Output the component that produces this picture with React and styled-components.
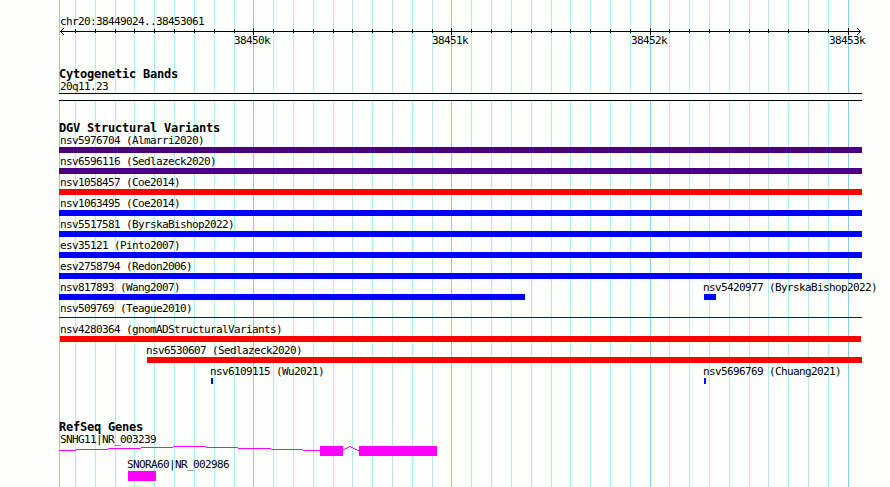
import React from 'react'
import styled, { createGlobalStyle } from 'styled-components'

const GlobalStyle = createGlobalStyle`
    body{
        margin: 0;
        padding: 0;
        background: #fdfffc;
    }
`;

const Browser = styled.main`
    display: grid;
    width: 890px;
    height: 487px;
    overflow: hidden;
    color: #000;
`;

const GridLines = styled.svg`
    grid-area: 1 / 1;
    display: block;
    shape-rendering: crispEdges;
`;

const Tracks = styled.div`
    grid-area: 1 / 1;
    display: flex;
    flex-direction: column;
    padding: 15px 0 0 59px;
`;

const Label = styled.div`
    height: 13px;
    font: 11px/13px 'DejaVu Sans Mono', monospace;
    letter-spacing: -0.62px;
    text-indent: ${p => p.$indent ?? 1}px;
    white-space: pre;
`;

const Title = styled.h2`
    height: 13px;
    margin: 0;
    font: bold 12px/13px 'DejaVu Sans Mono', monospace;
    letter-spacing: -0.22px;
    white-space: pre;
`;

const Ruler = styled.section`
    height: 53px;
`;

const Axis = styled.svg`
    display: block;
    shape-rendering: crispEdges;
`;

const Scale = styled.div`
    display: grid;
    margin-top: -1px;
`;

const ScaleMark = styled(Label)`
    grid-area: 1 / 1;
    margin-left: ${p => p.$x - 59}px;
    width: 40px;
`;

const Cytobands = styled.section`
    height: 54px;
`;

const BandName = styled(Label)`
    height: 12px;
    line-height: 11px;
`;

const Band = styled.div`
    box-sizing: border-box;
    width: 803px;
    height: 8px;
    border: solid #000;
    border-width: 1px 0;
    background: #fdfffc;
`;

const Variants = styled.section`
    height: 299px;
`;

const Lanes = styled.div`
    margin-top: -1px;
`;

const Lane = styled.div`
    display: grid;
    height: 21px;
`;

const Feature = styled.div`
    grid-area: 1 / 1;
    margin-left: ${p => p.$x - 59}px;
`;

const Bar = styled.div`
    width: ${p => p.$w}px;
    height: ${p => p.$h || 6}px;
    margin-top: ${p => p.$drop || 0}px;
    background: ${p => p.$color};
`;

const Genes = styled.section`
    display: flex;
    flex-direction: column;
`;

const GeneName = styled(Label)`
    height: 12px;
    line-height: 11px;
`;

const Transcript = styled.svg`
    display: block;
    shape-rendering: crispEdges;
`;

const SmallGene = styled.div`
    margin: 2px 0 0 69px;
`;

const majors = [253, 451, 650, 848]
const minors = [
    75, 95, 115, 134, 154, 174, 194, 214, 234,
    273, 293, 313, 333, 352, 372, 392, 412, 432,
    471, 491, 511, 531, 551, 570, 590, 610, 630,
    669, 689, 709, 729, 749, 768, 788, 808, 828,
]

const purple = '#4b0082'
const red = '#ff0000'
const blue = '#0000ff'

const lanes = [
    [{ name: 'nsv5976704 (Almarri2020)', x: 59, w: 803, color: purple }],
    [{ name: 'nsv6596116 (Sedlazeck2020)', x: 59, w: 803, color: purple }],
    [{ name: 'nsv1058457 (Coe2014)', x: 59, w: 803, color: red }],
    [{ name: 'nsv1063495 (Coe2014)', x: 59, w: 803, color: blue }],
    [{ name: 'nsv5517581 (ByrskaBishop2022)', x: 59, w: 803, color: blue }],
    [{ name: 'esv35121 (Pinto2007)', x: 59, w: 803, color: blue }],
    [{ name: 'esv2758794 (Redon2006)', x: 59, w: 803, color: blue }],
    [
        { name: 'nsv817893 (Wang2007)', x: 59, w: 466, color: blue },
        { name: 'nsv5420977 (ByrskaBishop2022)', x: 704, w: 12, color: blue, indent: -1 },
    ],
    [{ name: 'nsv509769 (Teague2010)', x: 59, w: 803, h: 1, drop: 2, color: blue }],
    [{ name: 'nsv4280364 (gnomADStructuralVariants)', x: 60, w: 801, color: red, indent: 0 }],
    [{ name: 'nsv6530607 (Sedlazeck2020)', x: 147, w: 715, color: red, indent: -1 }],
    [
        { name: 'nsv6109115 (Wu2021)', x: 211, w: 2, color: blue, indent: -1 },
        { name: 'nsv5696769 (Chuang2021)', x: 704, w: 2, color: blue, indent: -1 },
    ],
]

// intron drawn as one pixel steps: [x, y, width]
const intron = [
    [0, 4, 17], [17, 3, 32], [49, 2, 33], [82, 1, 32], [114, 0, 33],
    [147, 1, 32], [179, 2, 33], [212, 3, 32], [244, 4, 17],
    [284, 3, 2], [286, 2, 2], [288, 1, 2], [290, 0, 2],
    [292, 1, 2], [294, 2, 2], [296, 3, 2], [298, 4, 2],
]

const App = () => {
    return (
        <Browser>
            <GlobalStyle />
            <GridLines width="890" height="487">
                {minors.map(x => <rect key={x} x={x} y="0" width="1" height="487" fill="#afeeee" />)}
                {[59, ...majors].map(x => <rect key={x} x={x} y="0" width="1" height="487" fill="#87ceeb" />)}
            </GridLines>
            <Tracks>
                <Ruler>
                    <Label>chr20:38449024..38453061</Label>
                    <Axis width="803" height="7" viewBox="59 28 803 7">
                        <rect x="60" y="31" width="801" height="1" />
                        {minors.map(x => <rect key={x} x={x} y="29" width="1" height="4" />)}
                        {majors.map(x => <rect key={x} x={x} y="28" width="1" height="7" />)}
                        {[1, 2, 3].map(i => (
                            <g key={i}>
                                <rect x={60 + i} y={31 - i} width="1" height="1" />
                                <rect x={60 + i} y={31 + i} width="1" height="1" />
                                <rect x={860 - i} y={31 - i} width="1" height="1" />
                                <rect x={860 - i} y={31 + i} width="1" height="1" />
                            </g>
                        ))}
                    </Axis>
                    <Scale>
                        {majors.map((x, i) => (
                            <ScaleMark key={x} $x={x - 18} $indent={-1}>{`3845${i}k`}</ScaleMark>
                        ))}
                    </Scale>
                </Ruler>
                <Cytobands>
                    <Title>Cytogenetic Bands</Title>
                    <BandName>20q11.23</BandName>
                    <Band />
                </Cytobands>
                <Variants>
                    <Title>DGV Structural Variants</Title>
                    <Lanes>
                        {lanes.map((lane, i) => (
                            <Lane key={i}>
                                {lane.map(f => (
                                    <Feature key={f.name} $x={f.x}>
                                        <Label $indent={f.indent}>{f.name}</Label>
                                        <Bar $w={f.w} $h={f.h} $drop={f.drop} $color={f.color} />
                                    </Feature>
                                ))}
                            </Lane>
                        ))}
                    </Lanes>
                </Variants>
                <Genes>
                    <Title>RefSeq Genes</Title>
                    <GeneName>SNHG11|NR_003239</GeneName>
                    <Transcript width="378" height="10" fill="#ff00ff">
                        {intron.map(([x, y, w]) => <rect key={x} x={x} y={y} width={w} height="1" />)}
                        <rect x="261" y="0" width="23" height="10" />
                        <rect x="300" y="0" width="78" height="10" />
                    </Transcript>
                    <SmallGene>
                        <Label $indent={-1}>SNORA60|NR_002986</Label>
                        <Bar $w={28} $h={10} $color="#ff00ff" />
                    </SmallGene>
                </Genes>
            </Tracks>
        </Browser>
    )
}

export default App
